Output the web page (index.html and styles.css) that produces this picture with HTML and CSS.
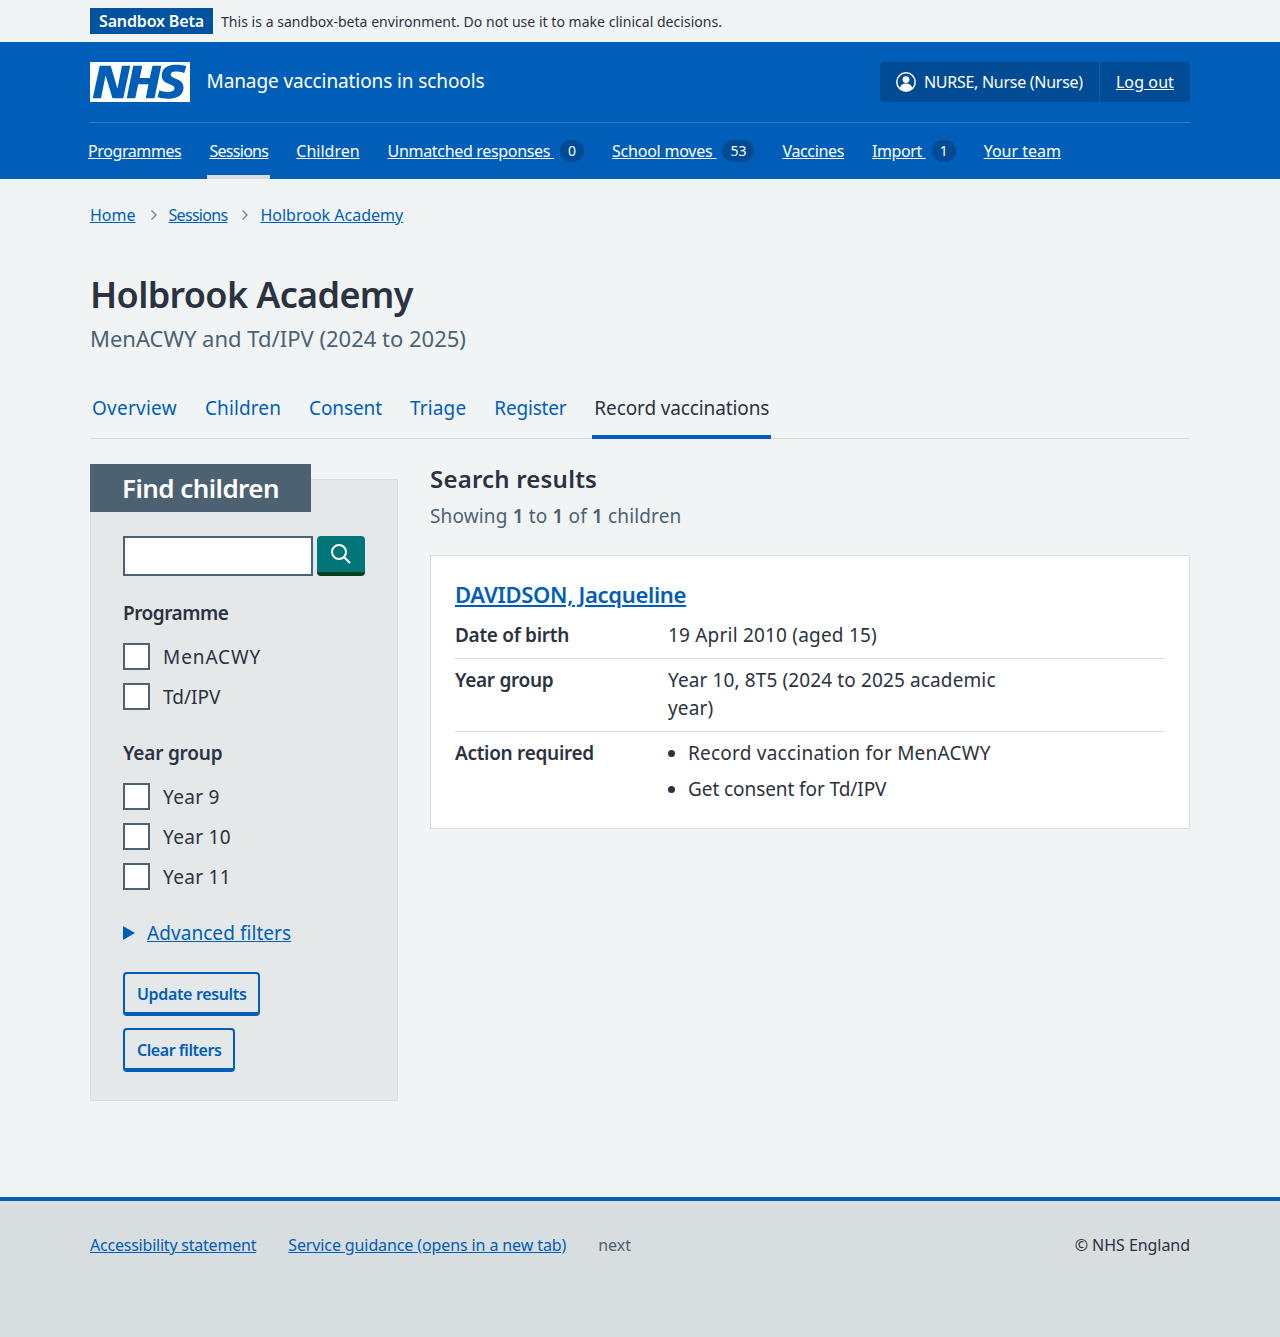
FILE: index.html
```html
<!DOCTYPE html>
<html lang="en">
<head>
<meta charset="utf-8">
<title>Holbrook Academy</title>
<link rel="stylesheet" href="styles.css">
</head>
<body>
<div class="env"><div class="wrap env-in"><strong class="env-tag">Sandbox Beta</strong><span class="env-msg">This is a sandbox-beta environment. Do not use it to make clinical decisions.</span></div></div>
<header class="header">
  <div class="wrap">
    <div class="head-row">
      <a class="brand" href="#">
        <svg class="logo" viewBox="0 0 40 16" aria-label="NHS"><path fill="#fff" d="M0 0h40v16H0z"/><path fill="#005eb8" d="M3.9 1.5h4.4l2.6 9h.1l1.8-9h3.3l-2.8 13H9l-2.7-9h-.1l-1.8 9H1.1M17.3 1.5h3.6l-1 4.9h4L25 1.5h3.5l-2.7 13h-3.5l1.1-5.6h-4.1l-1.2 5.6h-3.4M37.7 4.4c-.7-.3-1.6-.6-2.9-.6-1.4 0-2.5.2-2.5 1.3 0 1.8 5.1 1.2 5.1 5.1 0 3.6-3.3 4.5-6.4 4.5-1.3 0-2.9-.3-4-.7l.8-2.7c.7.4 2.1.7 3.2.7s2.8-.2 2.8-1.5c0-2.1-5.1-1.3-5.1-5 0-3.4 2.9-4.4 5.8-4.4 1.6 0 3.1.2 4 .6"/></svg>
        <span class="service">Manage vaccinations in schools</span>
      </a>
      <div class="account">
        <span class="acc-item acc-name">
          <svg class="acc-icon" viewBox="0 0 20 20"><circle cx="10" cy="10" r="9.2" fill="none" stroke="#fff" stroke-width="1.5"/><circle cx="10" cy="7.6" r="3.4" fill="#fff"/><path fill="#fff" d="M3.9 16c.4-3 2.6-4.5 6.1-4.5s5.700 1.500 6.100 4.500c-1.500 1.900-3.600 3-6.100 3s-4.600-1.100-6.100-3z"/></svg>
          <span>NURSE, Nurse (Nurse)</span>
        </span>
        <a class="acc-item acc-link" href="#">Log out</a>
      </div>
    </div>
    <nav class="nav">
      <a href="#" class="ls-prog">Programmes</a>
      <a href="#" class="active ls-sess">Sessions</a>
      <a href="#">Children</a>
      <span class="nav-item"><a href="#" class="ls-unm">Unmatched responses&nbsp;</a><span class="count">0</span></span>
      <span class="nav-item"><a href="#" class="ls-sch">School moves&nbsp;</a><span class="count">53</span></span>
      <a href="#" class="ls-vac">Vaccines</a>
      <span class="nav-item"><a href="#" class="ls-imp">Import&nbsp;</a><span class="count">1</span></span>
      <a href="#">Your team</a>
    </nav>
  </div>
</header>
<div class="wrap">
  <ol class="crumbs">
    <li><a href="#">Home</a></li>
    <li><svg viewBox="0 0 8 12" class="chev"><path d="M1.500 1.500 6 6l-4.500 4.500" fill="none" stroke="#768692" stroke-width="1.400"/></svg><a href="#" class="ls-sess">Sessions</a></li>
    <li><svg viewBox="0 0 8 12" class="chev"><path d="M1.500 1.500 6 6l-4.500 4.500" fill="none" stroke="#768692" stroke-width="1.400"/></svg><a href="#">Holbrook Academy</a></li>
  </ol>
  <main>
    <h1 class="title">Holbrook Academy</h1>
    <p class="caption">MenACWY and Td/IPV (2024 to 2025)</p>
    <nav class="tabs">
      <a href="#">Overview</a><a href="#">Children</a><a href="#">Consent</a><a href="#">Triage</a><a href="#">Register</a><a href="#" class="current">Record vaccinations</a>
    </nav>
    <div class="columns">
      <aside class="filters">
        <h2 class="filters-head">Find children</h2>
        <div class="filters-body">
          <div class="search">
            <input class="search-input" type="text" aria-label="Search">
            <button class="search-btn" type="button" aria-label="Search"><svg viewBox="0 0 24 24" class="search-icon"><circle cx="10" cy="10" r="7" fill="none" stroke="#fff" stroke-width="2"/><path d="M15.500 15.500 20.500 20.500" fill="none" stroke="#fff" stroke-width="2" stroke-linecap="round"/></svg></button>
          </div>
          <h3 class="legend leg-prog">Programme</h3>
          <div class="checks">
            <label class="check"><span class="box"></span><span class="ls-men">MenACWY</span></label>
            <label class="check"><span class="box"></span>Td/IPV</label>
          </div>
          <h3 class="legend leg-year">Year group</h3>
          <div class="checks">
            <label class="check"><span class="box"></span><span class="ls-yr">Year 9</span></label>
            <label class="check"><span class="box"></span><span class="ls-yr">Year 10</span></label>
            <label class="check"><span class="box"></span><span class="ls-yr">Year 11</span></label>
          </div>
          <div class="details"><span class="tri"></span><a href="#">Advanced filters</a></div>
          <div class="btns">
            <button class="btn" type="button">Update results</button>
            <button class="btn btn-clear" type="button">Clear filters</button>
          </div>
        </div>
      </aside>
      <section class="results">
        <h2 class="res-title">Search results</h2>
        <p class="res-count">Showing <b>1</b> to <b>1</b> of <b>1</b> children</p>
        <article class="card">
          <h3 class="card-title"><a href="#">DAVIDSON, Jacqueline</a></h3>
          <dl class="summary">
            <div class="row"><dt>Date of birth</dt><dd>19 April 2010 (aged 15)</dd></div>
            <div class="row"><dt>Year group</dt><dd>Year 10, 8T5 (2024 to 2025 academic year)</dd></div>
            <div class="row last"><dt>Action required</dt><dd><ul class="actions"><li>Record vaccination for MenACWY</li><li>Get consent for Td/IPV</li></ul></dd></div>
          </dl>
        </article>
      </section>
    </div>
  </main>
</div>
<footer class="footer">
  <div class="wrap foot-in">
    <ul class="foot-links"><li><a href="#" class="ls-acc">Accessibility statement</a></li><li><a href="#" class="ls-svc">Service guidance (opens in a new tab)</a></li><li class="muted">next</li></ul>
    <p class="copy">© NHS England</p>
  </div>
</footer>
</body>
</html>
```
FILE: styles.css
```css
* { box-sizing: border-box; }
html, body { margin: 0; padding: 0; }
body { background: #f0f4f5; color: #2b3240; font-family: "Noto Sans", "Open Sans", sans-serif; font-size: 19px; line-height: 28px; }
a { color: #005eb8; }
.wrap { width: 1100px; margin: 0 auto; }
.env { height: 42px; padding-top: 8px; }
.env-in { display: flex; align-items: center; height: 26px; }
.env-tag { background: #00539f; color: #fff; font-size: 16px; letter-spacing: -0.15px; line-height: 26px; height: 26px; padding: 0 9px; font-weight: 600; }
.env-msg { font-size: 14px; letter-spacing: 0.03px; line-height: 26px; margin: 2px 0 0 8px; }
.header { background: #005eb8; height: 137px; color: #fff; }
.head-row { display: flex; justify-content: space-between; padding: 20px 0; border-bottom: 1px solid #2f78c4; box-sizing: content-box; height: 40px; }
.brand { display: flex; align-items: center; color: #fff; text-decoration: none; }
.logo { width: 100px; height: 40px; display: block; }
.service { font-size: 19px; letter-spacing: -0.1px; margin: 0 0 2px 16.5px; }
.account { display: flex; background: #004b93; border-radius: 4px; height: 40px; font-size: 16px; }
.acc-item { display: flex; align-items: center; padding: 0 16px; color: #fff; }
.acc-name span { letter-spacing: -0.27px; }
.acc-icon { width: 20px; height: 20px; margin-right: 8px; }
.acc-link { border-left: 1px solid #005eb8; letter-spacing: 0.1px; }
.nav { display: flex; align-items: flex-start; height: 56px; margin-left: -4px; font-size: 16px; }
.nav a { color: #fff; }
.nav > a, .nav-item { display: block; padding: 14px 2px 0; height: 56px; margin-right: 24px; line-height: 28px; }
.nav-item { display: flex; align-items: flex-start; }
.nav > a.active { border-bottom: 4px solid #d8dde0; }
.ls-prog { letter-spacing: -0.4px; }
.ls-sess { letter-spacing: -0.7px; }
.ls-unm { letter-spacing: -0.32px; }
.ls-sch { letter-spacing: -0.22px; }
.ls-vac { letter-spacing: -0.35px; }
.ls-imp { letter-spacing: -0.4px; }
.count { display: inline-block; min-width: 24px; height: 22px; line-height: 22px; margin-top: 3px; margin-left: 6px; padding: 0 8px; border-radius: 11px; background: #004b93; font-size: 14px; text-align: center; font-weight: 400; color: #fff; }
.crumbs { list-style: none; display: flex; margin: 0; padding: 22px 0 0; font-size: 16px; line-height: 28px; height: 64px; }
.crumbs li { display: flex; align-items: center; height: 28px; }
.chev { width: 8px; height: 12px; margin: 0 11px 0 14px; }
.title { font-size: 36px; line-height: 44px; font-weight: 600; letter-spacing: -0.65px; margin: 30px 0 0; }
.caption { font-size: 22px; line-height: 32px; color: #4c6272; margin: 5px 0 0; }
.tabs { display: flex; gap: 24px; height: 85px; padding-top: 27px; border-bottom: 1px solid #d8dde0; font-size: 19px; }
.tabs a { display: block; padding: 13px 2px 0; height: 58px; text-decoration: none; }
.tabs a:nth-child(1) { letter-spacing: 0.25px; }
.tabs a:nth-child(2) { letter-spacing: 0.12px; }
.tabs a:nth-child(3) { letter-spacing: -0.1px; }
.tabs a:nth-child(4) { letter-spacing: 0.15px; }
.tabs a:nth-child(5) { letter-spacing: -0.2px; }
.tabs a.current { color: #2b3240; letter-spacing: -0.12px; border-bottom: 4px solid #005eb8; }
.columns { display: flex; align-items: flex-start; gap: 32px; margin-top: 25px; }
.filters { width: 308px; margin-top: 15px; background: #e4e8e9; border: 1px solid #d8dde0; padding-bottom: 28px; }
.filters-head { background: #4c6272; color: #fff; width: 221px; height: 48px; margin: -16px 0 0 -1px; padding-left: 32px; font-size: 26px; letter-spacing: -0.55px; line-height: 48px; font-weight: 600; }
.filters-body { padding: 24px 32px 0; }
.search { display: flex; gap: 4px; }
.search-input { width: 190px; height: 40px; border: 2px solid #4c6272; background: #fff; border-radius: 0; padding: 0; margin: 0; }
.search-btn { width: 48px; height: 40px; border: 0; background: #007678; border-bottom: 4px solid #00401e; border-radius: 4px; padding: 0; display: flex; align-items: center; justify-content: center; }
.search-icon { width: 24px; height: 24px; display: block; }
.legend { font-size: 19px; line-height: 28px; font-weight: 600; margin: 0; }
.leg-prog { margin-top: 23px; letter-spacing: -0.5px; }
.leg-year { margin-top: 28px; letter-spacing: -0.2px; }
.checks { margin-top: 16px; display: flex; flex-direction: column; gap: 12px; }
.check { display: flex; align-items: center; height: 28px; font-size: 19px; }
.ls-men { letter-spacing: 0.9px; }
.ls-yr { letter-spacing: 0.33px; }
.box { width: 27px; height: 27px; border: 2px solid #4c6272; background: #fff; margin: -2px 13px 0 0; flex: none; }
.details { display: flex; align-items: center; margin-top: 28px; height: 28px; }
.details a { letter-spacing: 0.06px; }
.tri { width: 0; height: 0; border-left: 12px solid #005eb8; border-top: 7px solid transparent; border-bottom: 7px solid transparent; margin-right: 12px; }
.btns { display: flex; flex-direction: column; align-items: flex-start; gap: 12px; margin-top: 25px; }
.btn { height: 44px; font-family: inherit; padding: 2px 12px 0; border: 2px solid #005eb8; border-bottom-width: 4px; border-radius: 4px; background: transparent; color: #005eb8; font-weight: 600; font-size: 16px; letter-spacing: -0.35px; line-height: 24px; }
.btn-clear { letter-spacing: -0.45px; }
.results { flex: 1; margin-top: -1px; }
.res-title { font-size: 24px; letter-spacing: 0.2px; line-height: 32px; font-weight: 600; margin: 0; }
.res-count { font-size: 19px; letter-spacing: 0.14px; line-height: 28px; color: #4c6272; margin: 7px 0 0; }
.res-count b { font-weight: 600; }
.card { background: #fff; border: 1px solid #d8dde0; margin-top: 25px; padding: 24px; height: 274px; }
.card-title { font-size: 22px; letter-spacing: -0.3px; line-height: 32px; font-weight: 600; margin: -2px 0 4px; }
.summary { margin: 0; }
.row { display: flex; border-bottom: 1px solid #d8dde0; padding: 7px 0 9px; }
.row.last { border-bottom: 0; }
.row dt { width: 213px; font-weight: 600; letter-spacing: -0.3px; flex: none; }
.row dd { margin: 0; width: 340px; letter-spacing: 0.12px; }
.row:first-child dd { letter-spacing: 0.2px; }
.actions { margin: 0; padding: 0 0 0 20px; }
.actions li { margin-bottom: 8px; letter-spacing: 0.23px; }
.actions li:last-child { letter-spacing: -0.08px; }
.footer { margin-top: 96px; background: #d8dde0; border-top: 4px solid #005eb8; height: 140px; font-size: 16px; }
.foot-in { display: flex; justify-content: space-between; padding-top: 30px; }
.foot-links { display: flex; list-style: none; margin: 0; padding: 0; gap: 32px; line-height: 28px; }
.ls-acc { letter-spacing: -0.22px; }
.ls-svc { letter-spacing: -0.11px; }
.muted { color: #4c6272; }
.copy { margin: 0; line-height: 28px; letter-spacing: -0.05px; }
```
